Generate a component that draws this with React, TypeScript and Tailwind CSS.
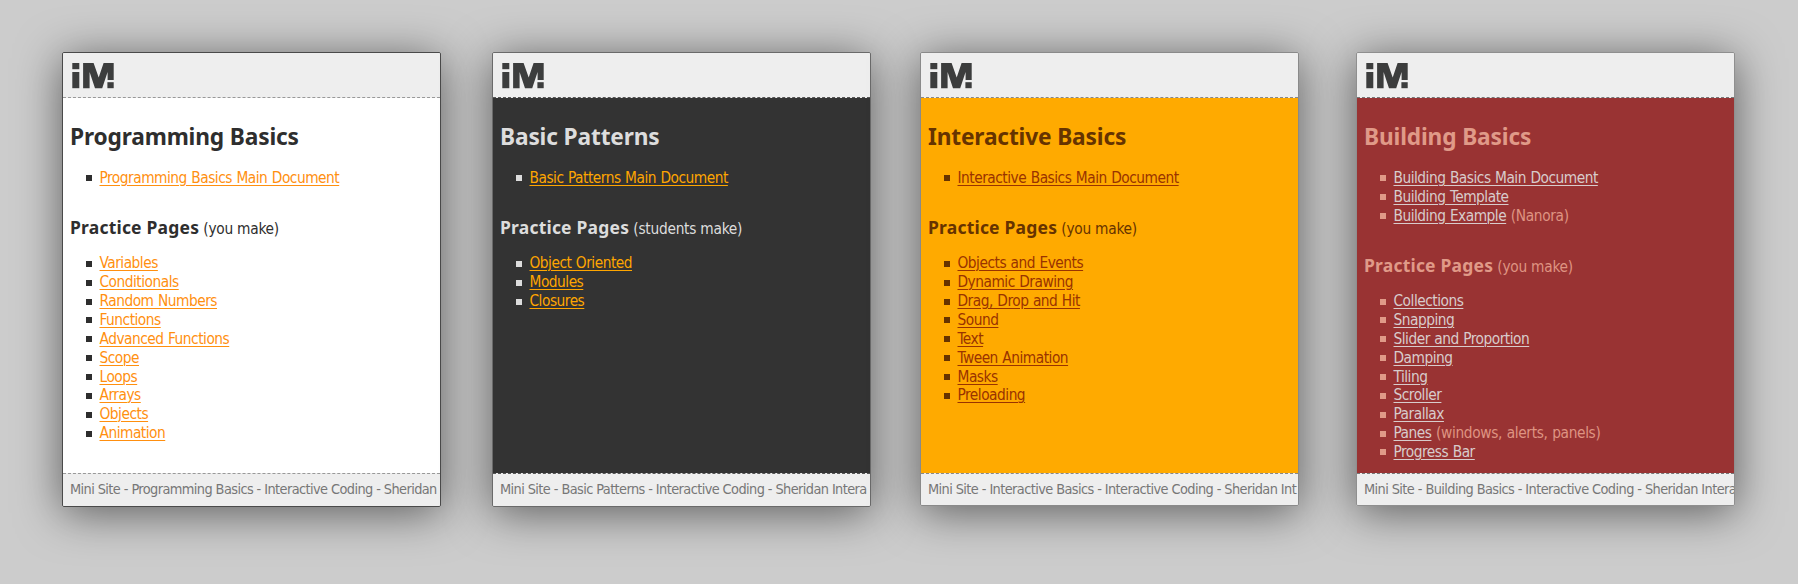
type Item = { label: string; note?: string };

type Site = {
  title: string;
  intro: Item[];
  note: string;
  pages: Item[];
  school: string;
  frame: string;
  body: string;
  heading: string;
  link: string;
  bullet: string;
  rule: string;
  footer: string;
};

const list = (...labels: string[]): Item[] => labels.map((label) => ({ label }));

const sites: Site[] = [
  {
    title: 'Programming Basics',
    intro: list('Programming Basics Main Document'),
    note: '(you make)',
    pages: list(
      'Variables',
      'Conditionals',
      'Random Numbers',
      'Functions',
      'Advanced Functions',
      'Scope',
      'Loops',
      'Arrays',
      'Objects',
      'Animation',
    ),
    school: 'Sheridan',
    frame: 'ml-[62px] h-[455px] border-[#4a4a4a]',
    body: 'bg-white text-[#2e2e2e]',
    heading: 'text-[#2e2e2e]',
    link: 'text-[#ff8f0f]',
    bullet: 'bg-[#2e2e2e]',
    rule: 'border-[#999999]',
    footer: 'h-[33px]',
  },
  {
    title: 'Basic Patterns',
    intro: list('Basic Patterns Main Document'),
    note: '(students make)',
    pages: list('Object Oriented', 'Modules', 'Closures'),
    school: 'Sheridan Intera',
    frame: 'ml-[51px] h-[455px] border-[#6a6a6a]',
    body: 'bg-[#333333] text-[#dddddd]',
    heading: 'text-[#dddddd]',
    link: 'text-[#ffa600]',
    bullet: 'bg-[#dddddd]',
    rule: 'border-[#555555]',
    footer: 'h-[33px]',
  },
  {
    title: 'Interactive Basics',
    intro: list('Interactive Basics Main Document'),
    note: '(you make)',
    pages: list(
      'Objects and Events',
      'Dynamic Drawing',
      'Drag, Drop and Hit',
      'Sound',
      'Text',
      'Tween Animation',
      'Masks',
      'Preloading',
    ),
    school: 'Sheridan Int',
    frame: 'ml-[49px] h-[454px] border-[#8a8a8a]',
    body: 'bg-[#ffaa00] text-[#663300]',
    heading: 'text-[#663300]',
    link: 'text-[#993300]',
    bullet: 'bg-[#663300]',
    rule: 'border-[#888888]',
    footer: 'h-[32px]',
  },
  {
    title: 'Building Basics',
    intro: [
      { label: 'Building Basics Main Document' },
      { label: 'Building Template' },
      { label: 'Building Example', note: '(Nanora)' },
    ],
    note: '(you make)',
    pages: [
      ...list('Collections', 'Snapping', 'Slider and Proportion', 'Damping', 'Tiling', 'Scroller', 'Parallax'),
      { label: 'Panes', note: '(windows, alerts, panels)' },
      { label: 'Progress Bar' },
    ],
    school: 'Sheridan Intera',
    frame: 'ml-[57px] h-[454px] border-[#8f8f8f]',
    body: 'bg-[#993333] text-[#df9482]',
    heading: 'text-[#e09a88]',
    link: 'text-[#d8cccc]',
    bullet: 'bg-[#e09a88]',
    rule: 'border-[#777777]',
    footer: 'h-[32px]',
  },
];

function Logo() {
  return (
    <svg className="block" width="44" height="28" viewBox="0 0 44 28" fill="#3c3d3d">
      <rect x="1.3" y="1" width="7" height="6.2" />
      <rect x="1.3" y="10" width="7" height="16.2" />
      <path d="M12.1 1H22.6L27.7 15.5L32.6 1H42.7V18H36.6V10L31.2 26.2H24L18.6 10V26.2H12.1Z" />
      <rect x="36.4" y="20.2" width="6.3" height="6" />
    </svg>
  );
}

function Links({ items, site }: { items: Item[]; site: Site }) {
  return (
    <ul className="pl-[16px] text-[15.3px] leading-[18.87px] [word-spacing:0.6px]">
      {items.map((item) => (
        <li key={item.label} className="flex h-[18.87px] items-center whitespace-pre">
          <span className={`mr-[7.5px] size-[6px] shrink-0 ${site.bullet}`} />
          <a className={`underline decoration-1 underline-offset-2 tracking-[-0.49px] ${site.link}`}>{item.label}</a>
          {item.note && <span className="tracking-[-0.35px]"> {item.note}</span>}
        </li>
      ))}
    </ul>
  );
}

function Card({ site }: { site: Site }) {
  return (
    <section
      className={`mt-[52px] flex w-[379px] shrink-0 flex-col overflow-hidden rounded-[2px] border shadow-[0_6px_45px_rgba(0,0,0,0.55)] ${site.frame}`}
    >
      <header className={`h-[45px] shrink-0 border-b border-dashed bg-[#eeeeee] pt-[9px] pl-2 ${site.rule}`}>
        <Logo />
      </header>
      <main className={`flex-1 pl-[7px] ${site.body}`}>
        <h1
          className={`mt-[24px] font-['Noto_Sans',sans-serif] text-[22.7px] leading-[30px] font-bold tracking-[-0.15px] ${site.heading}`}
        >
          {site.title}
        </h1>
        <div className="mt-[17px]">
          <Links items={site.intro} site={site} />
        </div>
        <h2 className="mt-[27px] mb-[15.5px] h-6 leading-6 whitespace-pre">
          <span
            className={`font-['Noto_Sans',sans-serif] text-[17.5px] font-bold tracking-[0.2px] ${site.heading}`}
          >
            Practice Pages
          </span>
          <span className="text-[15.3px] tracking-[-0.25px]"> {site.note}</span>
        </h2>
        <Links items={site.pages} site={site} />
      </main>
      <footer
        className={`shrink-0 overflow-hidden border-t border-dashed bg-[#eeeeee] pl-[7px] text-[14.4px] leading-[31px] tracking-[-0.59px] whitespace-nowrap text-[#777777] ${site.footer} ${site.rule}`}
      >
        Mini Site - {site.title} - Interactive Coding - {site.school}
      </footer>
    </section>
  );
}

export default function App() {
  return (
    <div className="flex h-[584px] w-[1798px] overflow-hidden bg-[#cccccc] font-['DejaVu_Sans_Condensed','DejaVu_Sans',sans-serif]">
      {sites.map((site) => (
        <Card key={site.title} site={site} />
      ))}
    </div>
  );
}
